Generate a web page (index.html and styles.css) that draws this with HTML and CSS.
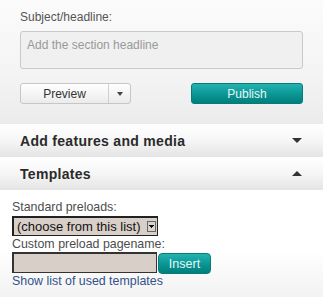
FILE: index.html
```html
<!DOCTYPE html>
<html lang="en">
<head>
  <meta charset="UTF-8">
  <title>Section editor</title>
  <link rel="stylesheet" href="styles.css">
</head>
<body>
  <div class="sidebar">
    <!-- Headline + actions -->
    <div class="compose">
      <label class="field-label" for="headline">Subject/headline:</label>
      <textarea id="headline" class="headline-input" placeholder="Add the section headline"></textarea>

      <div class="actions">
        <div class="split-btn">
          <button class="split-main">Preview</button>
          <button class="split-toggle"><span class="caret-down small"></span></button>
        </div>
        <button class="btn-teal publish">Publish</button>
      </div>
    </div>

    <!-- Collapsible sections -->
    <div class="section-head">
      <span class="section-title">Add features and media</span>
      <span class="caret-down"></span>
    </div>
    <div class="section-head">
      <span class="section-title">Templates</span>
      <span class="caret-up"></span>
    </div>

    <div class="templates">
      <div class="tpl-label">Standard preloads:</div>
      <span class="select-wrap">
        <select class="tpl-select">
          <option>(choose from this list)</option>
        </select>
      </span>
      <div class="tpl-label">Custom preload pagename:</div>
      <div class="insert-row">
        <input type="text" class="tpl-input">
        <button class="btn-teal insert">Insert</button>
      </div>
      <a href="#" class="tpl-link">Show list of used templates</a>
    </div>
  </div>
</body>
</html>
```
FILE: styles.css
```css
body {
  margin: 0;
  font-family: "Liberation Sans", Arial, sans-serif;
  color: #555;
  background-color: #fff;
}

.sidebar {
  width: 323px;
}

.compose {
  padding: 10px 20px 20px;
  background: linear-gradient(to bottom, #fbfbfb 0%, #f4f4f4 60%, #ebebeb 100%);
}

.field-label {
  display: block;
  font-size: 12px;
  line-height: 14px;
  color: #555;
}

.headline-input {
  display: block;
  box-sizing: border-box;
  width: 283px;
  height: 38px;
  margin: 7px 0 0;
  padding: 6px 6px;
  font-family: inherit;
  font-size: 12px;
  line-height: 14px;
  background-color: #f0f0f0;
  border: 1px solid #c9c9c9;
  border-radius: 3px;
  resize: none;
}

.headline-input::placeholder {
  color: #999;
}

.actions {
  display: flex;
  justify-content: space-between;
  margin-top: 14px;
}

.split-btn {
  display: flex;
  height: 21px;
  box-sizing: border-box;
  border: 1px solid #c6c6c6;
  border-radius: 3px;
  background: linear-gradient(to bottom, #ffffff, #ebebeb);
  overflow: hidden;
}

.split-btn button {
  border: 0;
  background: transparent;
  font-family: inherit;
  font-size: 12px;
  color: #333;
  padding: 0;
}

.split-main {
  width: 88px;
  border-right: 1px solid #d0d0d0 !important;
}

.split-toggle {
  width: 21px;
  display: flex;
  align-items: center;
  justify-content: center;
}

.btn-teal {
  box-sizing: border-box;
  border: 1px solid #0a7a78;
  background: linear-gradient(to bottom, #22b3b0 0%, #0c9896 50%, #007f7d 100%);
  color: #e6f7f6;
  font-family: inherit;
  padding: 0;
}

.publish {
  width: 112px;
  height: 21px;
  font-size: 12px;
  border-radius: 3px;
}

.section-head {
  display: flex;
  align-items: center;
  justify-content: space-between;
  height: 33px;
  padding: 0 21px 0 20px;
  background: linear-gradient(to bottom, #ffffff 0%, #f6f6f6 50%, #e4e4e4 100%);
}

.section-title {
  font-size: 14px;
  font-weight: bold;
  letter-spacing: 0.3px;
  color: #2a2a2a;
}

.caret-down,
.caret-up {
  width: 0;
  height: 0;
  border-left: 5.5px solid transparent;
  border-right: 5.5px solid transparent;
}

.caret-down {
  border-top: 5px solid #333;
}

.caret-up {
  border-bottom: 5px solid #333;
}

.caret-down.small {
  border-left-width: 3.5px;
  border-right-width: 3.5px;
  border-top: 4px solid #444;
}

.templates {
  padding: 10px 12px 12px;
  background: linear-gradient(to bottom, #ffffff 55%, #f1f1f1 100%);
}

.tpl-label {
  font-size: 12.4px;
  line-height: 15px;
  color: #4d4d4d;
}

.select-wrap {
  position: relative;
  display: block;
  width: 146px;
  margin: 1px 0 1px;
}

.tpl-select {
  display: block;
  box-sizing: border-box;
  width: 146px;
  height: 20px;
  margin: 0;
  padding: 0 0 0 3px;
  font-family: inherit;
  font-size: 13px;
  color: #111;
  background-color: #d8cfc9;
  border: 1px solid #222;
  border-top-width: 2px;
  border-left-width: 2px;
  border-radius: 0;
  appearance: none;
  -webkit-appearance: none;
}

/* windows-style dropdown button drawn over the select */
.select-wrap::after {
  content: "";
  position: absolute;
  right: 2px;
  top: 5px;
  width: 9px;
  height: 11px;
  box-sizing: border-box;
  border: 1px solid #666;
  background:
    linear-gradient(#111, #111) 2px 4px / 3px 1px no-repeat,
    linear-gradient(#111, #111) 3px 5px / 1px 1px no-repeat,
    linear-gradient(#111, #111) 1px 3px / 5px 1px no-repeat,
    #d6d2ce;
}

.insert-row {
  display: flex;
  align-items: flex-start;
  gap: 1px;
}

.tpl-input {
  box-sizing: border-box;
  width: 145px;
  height: 21px;
  margin: 0;
  background-color: #d8cfc9;
  border: 1px solid #333;
  border-top-width: 2px;
  border-left-width: 2px;
}

.insert {
  width: 53px;
  height: 21px;
  margin-top: 1px;
  font-size: 12.5px;
  border-radius: 4px;
}

.tpl-link {
  display: block;
  font-size: 12.4px;
  line-height: 15px;
  color: #32528a;
  text-decoration: none;
}
```
